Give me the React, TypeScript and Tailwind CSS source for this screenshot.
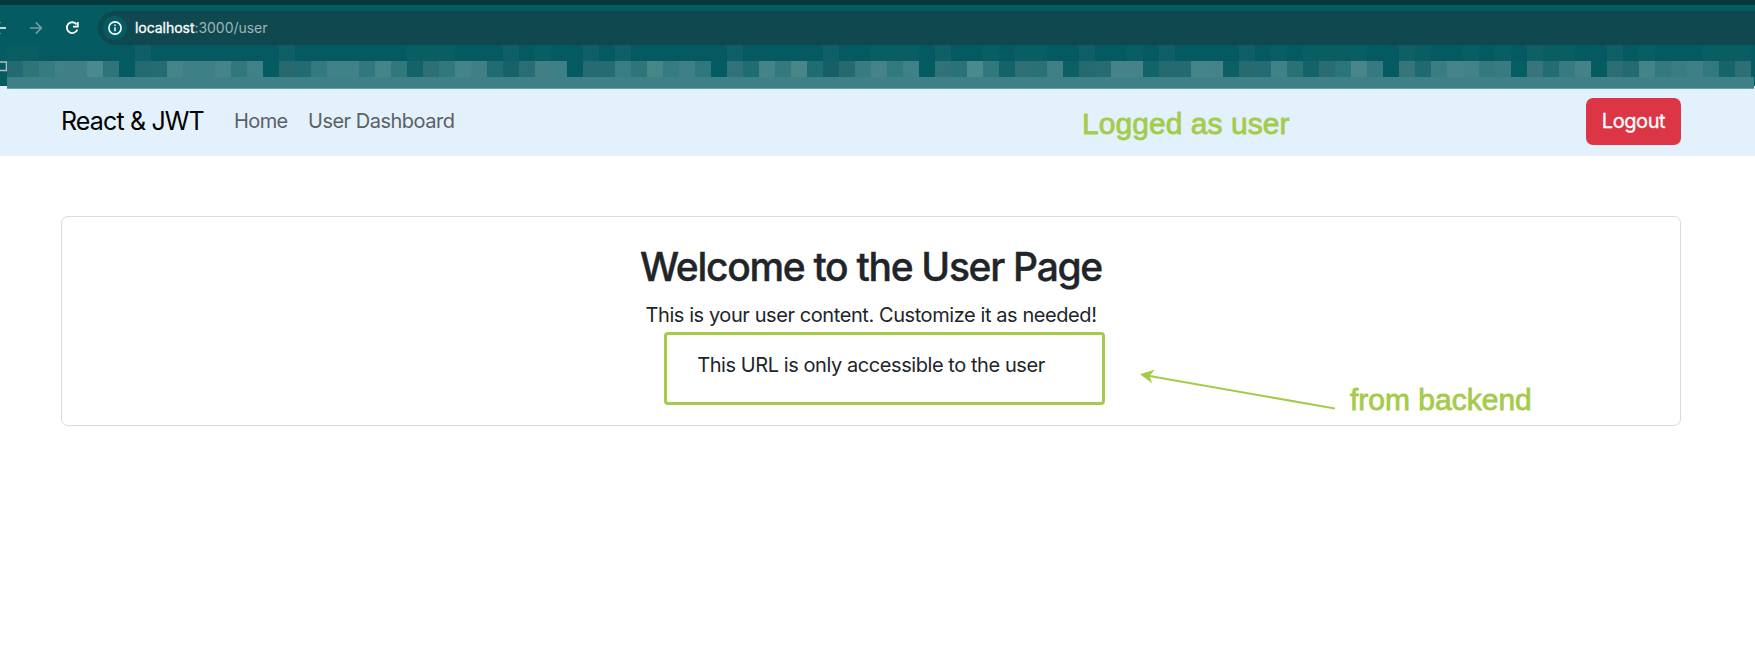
import React from "react";

const BASE = "#045c62";

// Colours of the pixelated bookmarks row, one entry per 16px tile.
const TILES =
  "226b72 2e757a 357b80 408188 407f85 4a898e 2e757a 045c62 236a70 226c72 458489 3f8086 3f8086 458489 31787d 408188 045c62 266a70 236b72 327a7f 408288 408288 32777d 458489 31787d 12636a 2c7075 30787c 438488 407f86 1f6c72 166268 296e74 417f85 3f8086 045c62 266b71 256c72 387d82 2e757b 458686 377b82 407f86 2e777c 045c62 31717a 1f6c72 438488 33797e 498589 1f6c72 165f66 266a70 387c81 458388 30797c 408087 045c62 307277 2a7278 4a898c 31787d 12636a 2e7076 2a7176 407f86 0c5f65 246a70 266c71 458388 458388 12636a 246a70 246a70 458489 458388 0c5f65 276b71 246c73 408288 2a7176 12636a 2a6c73 2a757b 498589 357a80 045c62 38747b 1f6a70 3a7c82 468489 438288 33797e 387c81 065e65 38747b 226c72 377b80 438388 045c62 2c6e74 246a70 438488 33797e 397d82 3f8086 32787e 14646a 2c6f74 045c62".split(
    " ",
  );

const BRIGHT = new Set([8, 17, 31, 36, 38, 45, 51, 58, 67, 72, 77, 87, 95, 100]);
const FAINT = new Set([0, 1, 25, 26, 27, 33, 54, 55, 56, 61, 63, 64, 70, 79, 81, 82, 83, 84, 88, 91, 93, 96, 97, 102, 106, 107, 108]);

function upperTile(i: number) {
  if (BRIGHT.has(i)) return "#0f6066";
  if (FAINT.has(i)) return "#085e63";
  return "#045a60";
}

function Mosaic() {
  return (
    <div className="absolute left-[7px] top-[40px] flex h-11 w-[1747px] flex-col overflow-hidden">
      <div className="flex h-4 shrink-0">
        {TILES.map((_, i) => (
          <div key={i} className="h-4 w-4 shrink-0" style={{ backgroundColor: upperTile(i) }} />
        ))}
      </div>
      <div className="flex h-4 shrink-0">
        {TILES.map((c, i) => (
          <div key={i} className="h-4 w-4 shrink-0" style={{ backgroundColor: c ? "#" + c : BASE }} />
        ))}
      </div>
      <div className="h-3 shrink-0 border-b border-[#6a9fa9] bg-[#3d8086]" />
    </div>
  );
}

function BrowserBar() {
  return (
    <header className="relative h-[86px] shrink-0 border-t-[5px] border-[#03383d] bg-[#045c62]">
      <div className="flex h-[46px] items-center">
        <svg className="w-[30px] shrink-0" height="46" viewBox="0 0 30 46" fill="none">
          <path d="M-6 23H6M0 17l-6 6 6 6" stroke="#fff" strokeWidth="1.7" />
        </svg>
        <svg className="w-[35px] shrink-0" height="46" viewBox="0 0 35 46" fill="none">
          <path d="M0 23H11M5.8 17.4l5.5 5.6-5.5 5.6" stroke="#6f9ea3" strokeWidth="1.7" />
        </svg>
        <svg className="w-[33px] shrink-0" height="46" viewBox="0 0 33 46" fill="none">
          <path d="M11.6 19.4A5.4 5.4 0 1 0 12.3 24.6" stroke="#fff" strokeWidth="1.8" />
          <path d="M12.8 17v4.7H8" stroke="#fff" strokeWidth="1.8" />
        </svg>
        <div className="flex h-[34px] flex-1 items-center rounded-l-full bg-[#0f494f] pl-[5px]">
          <span className="flex h-6 w-6 items-center justify-center rounded-full bg-[#045c62]">
            <svg width="14" height="14" viewBox="0 0 14 14" fill="none">
              <circle cx="7" cy="7" r="6.1" stroke="#fff" strokeWidth="1.6" />
              <path d="M7 6.2v4M7 3.6v1.5" stroke="#fff" strokeWidth="1.5" />
            </svg>
          </span>
          <p className="ml-[8px] whitespace-nowrap font-[Inter,sans-serif] text-[14px] leading-5 tracking-[-0.04px] text-[#9cb6b9]">
            <span className="text-white [-webkit-text-stroke:0.3px_white]">localhost</span>:3000/user
          </p>
        </div>
      </div>
      <svg className="absolute left-0 top-[56px]" width="7" height="11" viewBox="0 0 7 11" fill="none">
        <path d="M0 1H6.5V9.5H0" stroke="#b9bcbc" strokeWidth="1.5" />
      </svg>
      <Mosaic />
    </header>
  );
}

function Navbar() {
  return (
    <nav className="flex h-[70px] shrink-0 items-center bg-[#e3f1fd] pl-[61px] pr-[74px] text-[20px] leading-[30px]">
      <span className="w-[173px] whitespace-nowrap text-[25px] tracking-[-0.85px] text-black">React &amp; JWT</span>
      <a className="w-[74px] whitespace-nowrap tracking-[-0.6px] text-[#5b6065]">Home</a>
      <a className="whitespace-nowrap tracking-[-0.5px] text-[#5b6065]">User Dashboard</a>
      <button className="ml-auto h-[47px] w-[95px] rounded-[7px] bg-[#dc3545] tracking-[-0.4px] text-white [-webkit-text-stroke:0.3px_white]">
        Logout
      </button>
    </nav>
  );
}

export default function App() {
  return (
    <div className="relative flex h-[659px] w-[1755px] flex-col overflow-hidden bg-white font-[Inter,sans-serif] text-[#212529]">
      <BrowserBar />
      <Navbar />
      <main className="pl-[61px] pr-[74px] pt-[60px]">
        <section className="flex h-[210px] flex-col items-center rounded-[7px] border border-[#d9dadb] pt-[26px]">
          <h1 className="whitespace-nowrap text-[39px] font-medium leading-[48px] tracking-[-1.3px] [-webkit-text-stroke:0.4px_#212529]">
            Welcome to the User Page
          </h1>
          <p className="mt-[9px] whitespace-nowrap text-[20px] leading-[30px] tracking-[-0.42px]">
            This is your user content. Customize it as needed!
          </p>
          <p className="mt-[20px] whitespace-nowrap text-[20px] leading-[30px] tracking-[-0.43px]">
            This URL is only accessible to the user
          </p>
        </section>
      </main>

      <div className="absolute left-[664px] top-[332px] h-[73px] w-[441px] rounded-[4px] border-[3px] border-[#a5cb4a]" />
      <svg className="absolute left-[1130px] top-[360px]" width="220" height="60" viewBox="0 0 220 60">
        <path d="M18 15.8L205 48.5" stroke="#a5cb4a" strokeWidth="2" />
        <path d="M10 14.3L25 9.5L19.5 16L22.3 23.5Z" fill="#a5cb4a" />
      </svg>
      <span className="absolute left-[1082px] top-[105.5px] whitespace-nowrap font-['Liberation_Sans',sans-serif] text-[30px] leading-[36px] tracking-[0.05px] text-[#a5cb4a] [-webkit-text-stroke:0.8px_#a5cb4a]">
        Logged as user
      </span>
      <span className="absolute left-[1350px] top-[382px] whitespace-nowrap font-['Liberation_Sans',sans-serif] text-[30px] leading-[36px] text-[#a5cb4a] [-webkit-text-stroke:0.8px_#a5cb4a]">
        from backend
      </span>
    </div>
  );
}
